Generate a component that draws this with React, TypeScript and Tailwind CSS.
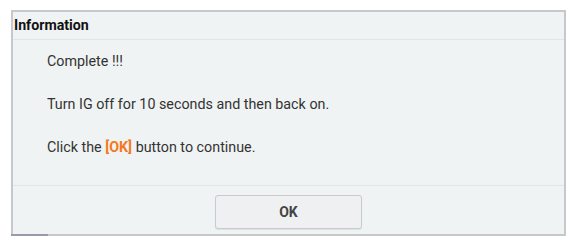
export default function App() {
  return (
    <div className="w-[576px] h-[245px] bg-white pt-[10px] pl-[11px] font-['Roboto',sans-serif]">
      <div className="relative w-[555px] h-[226px] border-2 border-[#c6c8c9] bg-[#f0f3f4] flex flex-col">
        {/* header */}
        <div className="h-[28px] flex items-center px-[1px] border-b border-[#e1e5e7] text-[14.2px] font-bold text-[#111]">
          Information
        </div>

        {/* body */}
        <div className="h-[146px] border-b border-[#e1e5e7] pl-[34px] pt-[12px] flex flex-col gap-[25px] text-[14.3px] text-[#333] leading-[18px]">
          <p>Complete !!!</p>
          <p>Turn IG off for 10 seconds and then back on.</p>
          <p>
            Click the <span className="font-bold text-[#f47a20]">[OK]</span> button to continue.
          </p>
        </div>

        {/* footer */}
        <div className="flex-1 flex justify-center pt-[9px]">
          <button className="w-[147px] h-[34px] rounded-[3px] border border-[#c8cacd] bg-[#eef0f2] shadow-[0_1px_1px_rgba(0,0,0,0.08)] text-[14px] font-bold text-[#444]">
            OK
          </button>
        </div>

        <span className="absolute left-[-2px] bottom-[-2px] w-[37px] h-[2px] bg-[#9b9aa9]" />
      </div>
    </div>
  );
}
